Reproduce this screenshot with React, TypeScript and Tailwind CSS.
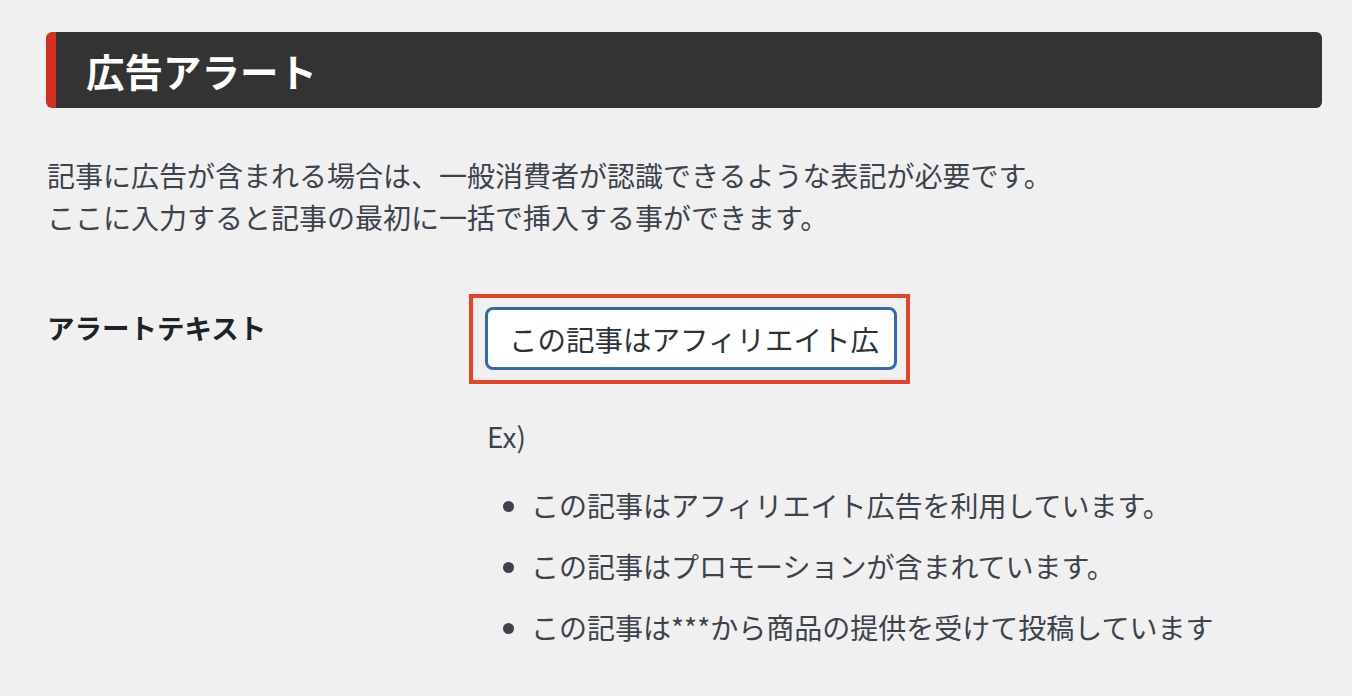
export default function App() {
  const examples = [
    "この記事はアフィリエイト広告を利用しています。",
    "この記事はプロモーションが含まれています。",
    "この記事は***から商品の提供を受けて投稿しています",
  ]

  return (
    <div className="min-h-screen bg-[#f0f0f1] px-[46px] pt-8 font-['Noto_Sans_CJK_JP','Noto_Sans',sans-serif] text-[#3c434a]">
      {/* Header */}
      <div className="flex h-[76px] w-[1276px] items-center rounded-md border-l-[10px] border-[#d72f20] bg-[#333333] pl-[30px]">
        <h2 className="text-[38.5px] font-bold leading-none text-white">広告アラート</h2>
      </div>

      {/* Description */}
      <p className="mt-[46px] pl-px text-[28px] leading-[42px]">
        記事に広告が含まれる場合は、一般消費者が認識できるような表記が必要です。
        <br />
        ここに入力すると記事の最初に一括で挿入する事ができます。
      </p>

      {/* Setting row */}
      <div className="mt-[56px] grid grid-cols-[423px_1fr]">
        <div className="pl-px pt-3 text-[27.5px] font-bold leading-[42px] text-[#1d2327]">
          アラートテキスト
        </div>
        <div>
          <div className="inline-block border-4 border-[#e94226] pb-[10px] pl-3 pr-[9px] pt-[9px]">
            <input
              type="text"
              readOnly
              value="この記事はアフィリエイト広告を利用しています。"
              className="h-[63px] w-[412px] rounded-lg border-[3px] border-[#3568ad] bg-white pl-[21px] pr-[14px] text-[28.5px] text-[#2c3338] outline-none"
            />
          </div>
          <div className="ml-[18px] mt-[31px] text-[28px] leading-[42px]">Ex)</div>
          <ul className="ml-[62px] mt-[27px] flex list-disc flex-col gap-[19px] text-[28px] leading-[42px]">
            {examples.map((ex) => (
              <li key={ex}>{ex}</li>
            ))}
          </ul>
        </div>
      </div>
    </div>
  )
}
